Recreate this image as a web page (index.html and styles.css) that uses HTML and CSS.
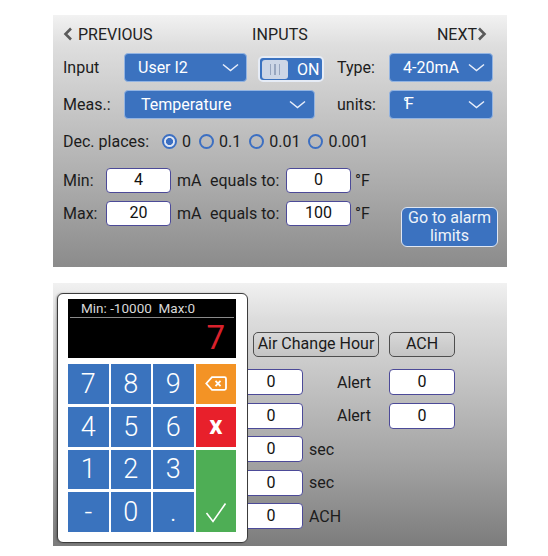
FILE: index.html
```html
<!DOCTYPE html>
<html>
<head>
<meta charset="utf-8">
<link rel="stylesheet" href="styles.css">
</head>
<body>
<div class="page">
  <section class="panel top">
    <div class="hdr">
      <span class="nav prev"><svg class="navchev" width="10" height="14" viewBox="0 0 10 14"><polyline points="8,1.5 2.5,7 8,12.5" /></svg>PREVIOUS</span>
      <span class="title">INPUTS</span>
      <span class="nav next">NEXT<svg class="navchev" width="10" height="14" viewBox="0 0 10 14"><polyline points="2,1.5 7.5,7 2,12.5" /></svg></span>
    </div>

    <div class="row r2">
      <span class="lbl lw1">Input</span>
      <div class="dd dd-user"><span>User I2</span><svg class="chev" width="17" height="9" viewBox="0 0 17 9"><polyline points="1,1.5 8.5,7.5 16,1.5" /></svg></div>
      <div class="toggle"><span class="thumb"><i></i><i></i><i></i></span><span class="on">ON</span></div>
      <span class="lbl lw2">Type:</span>
      <div class="dd dd-right"><span>4-20mA</span><svg class="chev" width="17" height="9" viewBox="0 0 17 9"><polyline points="1,1.5 8.5,7.5 16,1.5" /></svg></div>
    </div>

    <div class="row r3">
      <span class="lbl lw1">Meas.:</span>
      <div class="dd dd-meas"><span>Temperature</span><svg class="chev" width="17" height="9" viewBox="0 0 17 9"><polyline points="1,1.5 8.5,7.5 16,1.5" /></svg></div>
      <span class="lbl lw2 units">units:</span>
      <div class="dd dd-right"><span class="degf">°F</span><svg class="chev" width="17" height="9" viewBox="0 0 17 9"><polyline points="1,1.5 8.5,7.5 16,1.5" /></svg></div>
    </div>

    <div class="row r4">
      <span class="lbl lw3">Dec. places:</span>
      <span class="opt"><span class="radio sel"></span>0</span>
      <span class="opt"><span class="radio"></span>0.1</span>
      <span class="opt"><span class="radio"></span>0.01</span>
      <span class="opt"><span class="radio"></span>0.001</span>
    </div>

    <div class="row r5">
      <span class="lbl lw4">Min:</span>
      <span class="inp">4</span>
      <span class="unit">mA</span>
      <span class="eq">equals to:</span>
      <span class="inp">0</span>
      <span class="deglbl">°F</span>
    </div>

    <div class="row r6">
      <span class="lbl lw4">Max:</span>
      <span class="inp">20</span>
      <span class="unit">mA</span>
      <span class="eq">equals to:</span>
      <span class="inp">100</span>
      <span class="deglbl">°F</span>
      <button class="alarm">Go to alarm<br>limits</button>
    </div>
  </section>

  <section class="panel bot">
    <div class="brow btnrow">
      <span class="gbtn ach-hour">Air Change Hour</span>
      <span class="gbtn ach">ACH</span>
    </div>
    <div class="brow first">
      <span class="inp bi">0</span><span class="alert">Alert</span><span class="inp bi2">0</span>
    </div>
    <div class="brow">
      <span class="inp bi">0</span><span class="alert">Alert</span><span class="inp bi2">0</span>
    </div>
    <div class="brow">
      <span class="inp bi">0</span><span class="suffix">sec</span>
    </div>
    <div class="brow">
      <span class="inp bi">0</span><span class="suffix">sec</span>
    </div>
    <div class="brow">
      <span class="inp bi">0</span><span class="suffix">ACH</span>
    </div>

    <div class="keypad">
      <div class="display">
        <div class="range">Min: -10000  Max:0</div>
        <div class="value">7</div>
      </div>
      <div class="keys">
        <span class="key">7</span>
        <span class="key">8</span>
        <span class="key">9</span>
        <span class="key bksp"><svg width="22" height="15" viewBox="0 0 22 15"><path d="M7 1.2 H19.5 Q21 1.2 21 2.7 V12.3 Q21 13.8 19.5 13.8 H7 L1.3 7.5 Z" /><line x1="10.5" y1="4.8" x2="15.5" y2="10.2" /><line x1="15.5" y1="4.8" x2="10.5" y2="10.2" /></svg></span>
        <span class="key">4</span>
        <span class="key">5</span>
        <span class="key">6</span>
        <span class="key clr">x</span>
        <span class="key">1</span>
        <span class="key">2</span>
        <span class="key">3</span>
        <span class="key ok"><svg width="22" height="21" viewBox="0 0 22 21"><polyline points="1.5,11 8,19.5 20.5,1.5" /></svg></span>
        <span class="key">-</span>
        <span class="key">0</span>
        <span class="key">.</span>
      </div>
    </div>
  </section>
</div>
</body>
</html>
```

FILE: styles.css
```css
* { box-sizing: border-box; margin: 0; padding: 0; }

body {
  margin: 0;
  background: #ffffff;
  font-family: Roboto, "Liberation Sans", sans-serif;
  font-size: 16px;
  color: #1c1c1c;
}

.page {
  padding: 15px 0 0 53px;
}

.panel {
  width: 454px;
  position: relative;
}

/* ---------- top panel ---------- */
.top {
  height: 252px;
  padding-top: 7px;
  background: linear-gradient(#f2f2f2 0%, #dedede 12%, #c6c6c6 38%, #a9a9a9 70%, #8b8b8b 100%);
}

.hdr {
  display: grid;
  grid-template-columns: 1fr auto 1fr;
  align-items: center;
  height: 24px;
  color: #222;
}

.nav { display: flex; align-items: center; }
.prev { justify-self: start; margin-left: 10px; gap: 5px; }
.next { justify-self: end; margin-right: 20px; }
.title { letter-spacing: 0.1px; }

.navchev polyline {
  fill: none;
  stroke: #5a5a5a;
  stroke-width: 2.6;
}

.row {
  display: flex;
  align-items: center;
  padding-left: 10px;
}

.r2 { margin-top: 6px; height: 30px; }
.r3 { margin-top: 7px; height: 30px; }
.r4 { margin-top: 12px; height: 20px; }
.r5 { margin-top: 17px; height: 25px; }
.r6 { margin-top: 8px; height: 25px; align-items: flex-start; }

.lbl { flex: none; }
.lw1 { width: 61px; }
.lw2 { width: 52px; margin-left: 13px; }
.units { margin-left: 22px; }
.lw3 { width: 99px; }
.lw4 { width: 43px; line-height: 25px; }

.dd {
  flex: none;
  height: 29px;
  background: #3b72bf;
  border: 1px solid #93b4e2;
  border-radius: 4px;
  color: #fff;
  display: flex;
  align-items: center;
  justify-content: space-between;
  padding: 0 7px 0 13px;
}
.dd-user { width: 123px; }
.dd-meas { width: 191px; padding: 0 8px 0 16px; }
.dd-right { width: 104px; padding: 0 7px 0 13px; }

.chev polyline {
  fill: none;
  stroke: #e8eefa;
  stroke-width: 1.5;
}

.degf { letter-spacing: -4px; padding-bottom: 2px; }

.toggle {
  flex: none;
  margin-left: 11px;
  width: 66px;
  height: 26px;
  margin-top: 4px;
  border: 2px solid #e6ecf6;
  border-radius: 5px;
  background: #3a72c0;
  display: flex;
  align-items: center;
  color: #fff;
}
.thumb {
  margin-left: 2px;
  width: 26px;
  height: 19px;
  border-radius: 3px;
  background: #cdd6e6;
  display: flex;
  justify-content: center;
  align-items: center;
  gap: 3px;
}
.thumb i {
  display: block;
  width: 1.5px;
  height: 11px;
  background: #98a6bf;
}
.on { margin-left: 9px; }

.opt {
  display: flex;
  align-items: center;
  gap: 5px;
  margin-right: 8px;
}
.radio {
  width: 15px;
  height: 15px;
  border: 2px solid #3c6fc2;
  border-radius: 50%;
  display: inline-block;
}
.radio.sel {
  background: radial-gradient(circle, #3c6fc2 0 3.3px, #dfe6f3 3.8px);
}

.inp {
  flex: none;
  width: 65px;
  height: 25px;
  background: #fff;
  border: 1.5px solid #4c4a98;
  border-radius: 4px;
  text-align: center;
  line-height: 22px;
  color: #111;
}
.unit { width: 39px; padding-left: 6px; line-height: 25px; }
.eq { width: 76px; line-height: 25px; }
.deglbl { margin-left: 4px; line-height: 25px; }

.alarm {
  margin-left: auto;
  margin-right: 9px;
  margin-top: 6px;
  width: 97px;
  height: 40px;
  background: #3b72c0;
  border: 1.5px solid #dfe7f4;
  border-radius: 6px;
  color: #eef2f9;
  font-family: Roboto, "Liberation Sans", sans-serif;
  font-size: 16px;
  line-height: 18px;
}

/* ---------- bottom panel ---------- */
.bot {
  margin-top: 16px;
  height: 263px;
  padding: 49px 0 0 186px;
  background: linear-gradient(#f1f1f1 0%, #dcdcdc 14%, #c3c3c3 38%, #a3a3a3 68%, #7c7c7c 100%);
}

.brow {
  display: flex;
  align-items: center;
  height: 26px;
  margin-top: 7.5px;
}
.btnrow { margin-top: 0; margin-left: 14px; gap: 10px; height: 25px; }
.brow.first { margin-top: 12px; }

.gbtn {
  height: 25px;
  border: 1.5px solid #4e4e4e;
  border-radius: 5px;
  background: linear-gradient(#d8d8d8, #c4c4c4);
  text-align: center;
  line-height: 22px;
  color: #1a1a1a;
}
.ach-hour { width: 126px; }
.ach { width: 66px; }

.bi { width: 64px; height: 26px; line-height: 23px; }
.bi2 { width: 66px; height: 26px; line-height: 23px; }
.alert { width: 86px; padding-left: 34px; }
.suffix { margin-left: 6px; }

/* ---------- keypad overlay ---------- */
.keypad {
  position: absolute;
  left: 4px;
  top: 10px;
  width: 191px;
  height: 250px;
  background: #ffffff;
  border: 1px solid #3c3c3c;
  border-radius: 6px;
  padding: 5px 11px 10px 10px;
  box-shadow: -1px 0 2px rgba(0,0,0,0.25);
}

.display {
  height: 59px;
  background: #000;
}
.range {
  height: 19px;
  line-height: 19px;
  padding-left: 11px;
  font-size: 13.5px;
  color: #d8d8d8;
  white-space: pre;
  border-bottom: 1px solid #8a8a8a;
  margin: 0 2px;
}
.value {
  height: 39px;
  line-height: 39px;
  text-align: right;
  padding-right: 11px;
  font-size: 33px;
  color: #d8212c;
}

.keys {
  margin-top: 6px;
  height: 168px;
  display: grid;
  grid-template-columns: repeat(4, 1fr);
  grid-template-rows: repeat(4, 1fr);
  gap: 3px 2px;
}
.key {
  background: #3a73be;
  color: #fff;
  font-size: 27px;
  font-weight: 300;
  display: flex;
  align-items: center;
  justify-content: center;
}
.bksp { background: #f39325; }
.bksp svg path, .bksp svg line {
  fill: none;
  stroke: #fff;
  stroke-width: 1.8;
}
.clr {
  background: #e8202b;
  font-weight: 700;
  font-size: 26px;
  padding-bottom: 4px;
}
.ok {
  background: #4eae55;
  grid-column: 4;
  grid-row: 3 / span 2;
  align-items: flex-end;
  padding-bottom: 9px;
}
.ok svg polyline {
  fill: none;
  stroke: #fff;
  stroke-width: 1.6;
}
```
